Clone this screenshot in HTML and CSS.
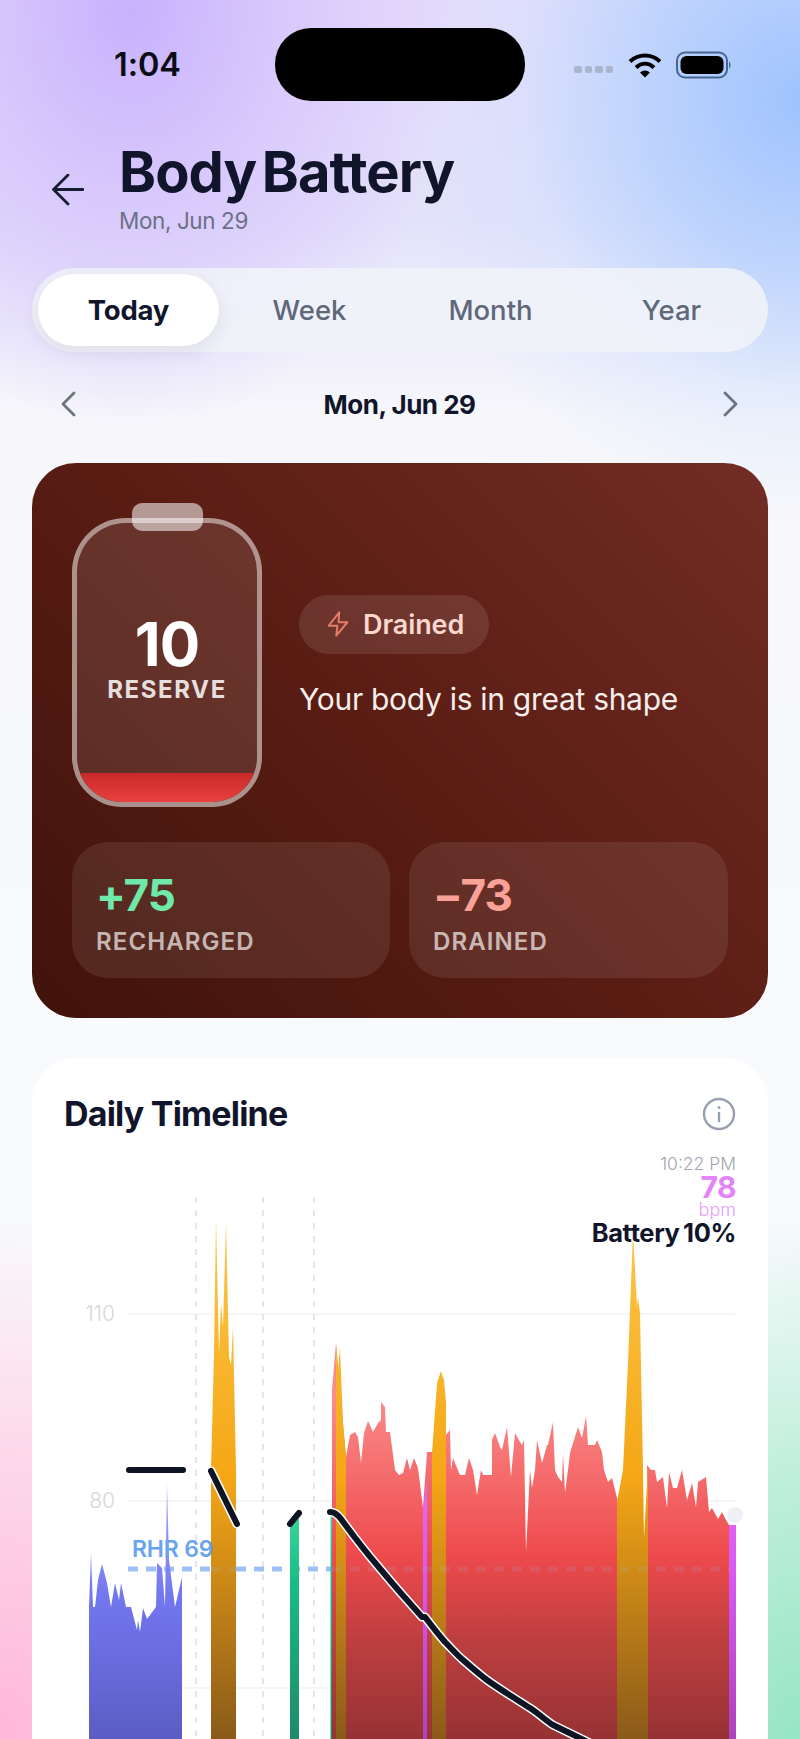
FILE: index.html
```html
<!DOCTYPE html>
<html lang="en">
<head>
<meta charset="utf-8">
<title>Body Battery</title>
<link rel="stylesheet" href="styles.css">
</head>
<body>
<div class="screen">
  <div class="status">
    <span class="time">1:04</span>
    <div class="island"></div>
    <div class="status-icons">
      <div class="dots"><i></i><i></i><i></i><i></i></div>
      <svg class="wifi" width="34" height="26" viewBox="0 0 34 26"><path d="M2 9.5C10.5 1.5 23.5 1.5 32 9.5" fill="none" stroke="#000" stroke-width="4"/><path d="M8 15.5C13.5 10.5 20.5 10.5 26 15.5" fill="none" stroke="#000" stroke-width="4"/><path d="M12 20.5 17 25.5 22 20.5C19 17.8 15 17.8 12 20.5Z" fill="#000"/></svg>
      <svg class="batt" width="56" height="28" viewBox="0 0 56 28"><rect x="1" y="1.5" width="50" height="25" rx="8" fill="none" stroke="#46658f" stroke-width="2"/><rect x="4.5" y="5" width="43" height="18" rx="6" fill="#000"/><path d="M53 10.5C55 11.5 55 16.5 53 17.5Z" fill="#46658f"/></svg>
    </div>
  </div>

  <header class="head">
    <svg class="back" width="32" height="32" viewBox="0 0 32 32"><path d="M31 15.5H2M16 1 1.5 15.5 16 30" fill="none" stroke="#171c30" stroke-width="2.8" stroke-linecap="round" stroke-linejoin="round"/></svg>
    <div class="head-text">
      <h1>Body Battery</h1>
      <p>Mon, Jun 29</p>
    </div>
  </header>

  <div class="tabs">
    <div class="tab active">Today</div>
    <div class="tab">Week</div>
    <div class="tab">Month</div>
    <div class="tab">Year</div>
  </div>

  <div class="date-nav">
    <svg width="16" height="26" viewBox="0 0 16 26"><path d="M14 2 3 13l11 11" fill="none" stroke="#6b7280" stroke-width="2.8" stroke-linecap="round" stroke-linejoin="round"/></svg>
    <span>Mon, Jun 29</span>
    <svg width="16" height="26" viewBox="0 0 16 26"><path d="M2 2l11 11L2 24" fill="none" stroke="#6b7280" stroke-width="2.8" stroke-linecap="round" stroke-linejoin="round"/></svg>
  </div>

  <section class="hero">
    <div class="hero-top">
      <div class="battery">
        <div class="battery-cap"></div>
        <div class="battery-body">
          <div class="battery-num">10</div>
          <div class="battery-label">RESERVE</div>
          <div class="battery-fill"></div>
        </div>
      </div>
      <div class="hero-info">
        <div class="badge">
          <svg width="28" height="28" viewBox="0 0 24 24"><path d="M13 2 4 13.5h7.5L10.5 22 20 10.5h-7.5L13 2Z" fill="none" stroke="#e87c6c" stroke-width="1.7" stroke-linejoin="round"/></svg>
          <span>Drained</span>
        </div>
        <p>Your body is in great shape</p>
      </div>
    </div>
    <div class="stats">
      <div class="stat"><div class="stat-num green">+75</div><div class="stat-label">RECHARGED</div></div>
      <div class="stat"><div class="stat-num salmon">−73</div><div class="stat-label">DRAINED</div></div>
    </div>
  </section>

  <section class="timeline">
    <div class="timeline-head">
      <h2>Daily Timeline</h2>
      <svg class="info" width="34" height="34" viewBox="0 0 34 34"><circle cx="17" cy="17" r="15" fill="none" stroke="#9aa0b0" stroke-width="2.4"/><path d="M17 16v8" stroke="#9aa0b0" stroke-width="2.4" stroke-linecap="round"/><circle cx="17" cy="10.5" r="1.5" fill="#9aa0b0"/></svg>
    </div>
    <div class="chart-wrap">
      <svg class="chart" width="736" height="559" viewBox="32 1180 736 559">
        <defs>
          <linearGradient id="gBlue" gradientUnits="userSpaceOnUse" x1="0" y1="1480" x2="0" y2="1739"><stop offset="0" stop-color="#a9acfb"/><stop offset=".45" stop-color="#7377ef"/><stop offset="1" stop-color="#5b5dc4"/></linearGradient>
          <linearGradient id="gOrange" gradientUnits="userSpaceOnUse" x1="0" y1="1210" x2="0" y2="1739"><stop offset="0" stop-color="#fcc84a"/><stop offset=".5" stop-color="#f5a716"/><stop offset=".62" stop-color="#dd9516"/><stop offset="1" stop-color="#8a5a1a"/></linearGradient>
          <linearGradient id="gRed" gradientUnits="userSpaceOnUse" x1="0" y1="1400" x2="0" y2="1739"><stop offset="0" stop-color="#fb8a8a"/><stop offset=".46" stop-color="#ee4a4c"/><stop offset=".7" stop-color="#bf3f40"/><stop offset="1" stop-color="#963234"/></linearGradient>
          <linearGradient id="gGreen" gradientUnits="userSpaceOnUse" x1="0" y1="1515" x2="0" y2="1739"><stop offset="0" stop-color="#3dd49d"/><stop offset=".3" stop-color="#18bd83"/><stop offset="1" stop-color="#1f8a6a"/></linearGradient>
          <linearGradient id="gMag" gradientUnits="userSpaceOnUse" x1="0" y1="1480" x2="0" y2="1739"><stop offset="0" stop-color="#e568f2"/><stop offset=".4" stop-color="#d757f0"/><stop offset="1" stop-color="#ad42bd"/></linearGradient>
        </defs>

        <g class="grid-h">
          <line x1="128" y1="1314" x2="735" y2="1314"/>
          <line x1="128" y1="1501" x2="735" y2="1501"/>
          <line x1="128" y1="1688" x2="735" y2="1688"/>
        </g>
        <g class="grid-v">
          <line x1="196" y1="1197" x2="196" y2="1739"/>
          <line x1="263" y1="1197" x2="263" y2="1739"/>
          <line x1="314" y1="1197" x2="314" y2="1739"/>
        </g>
        <text class="axis" x="115" y="1321" text-anchor="end">110</text>
        <text class="axis" x="115" y="1508" text-anchor="end">80</text>

        <line class="rhr-line" x1="128" y1="1569" x2="332" y2="1569"/>

        <polygon fill="url(#gBlue)" points="89,1739 89,1607 91,1553 93,1607 95,1607 98,1580 102,1564 107,1583 111,1607 115,1583 119,1600 121,1583 126,1607 131,1607 137,1630 138,1620 140,1632 143,1608 147,1619 156,1607 157,1563 162,1568 165,1607 167,1483 169,1560 175,1607 182,1577 182,1739"/>
        <polygon fill="url(#gOrange)" points="211,1739 211,1470 214,1353 216,1218 219,1353 221,1303 223,1327 226,1223 229,1357 231,1365 233,1327 236,1470 236,1739"/>
        <polygon fill="url(#gGreen)" points="290,1739 290,1528 299,1518 299,1739"/>
        <polygon fill="url(#gGreen)" points="330.5,1739 330.5,1515 333,1515 333,1739"/>
        <polygon fill="url(#gRed)" points="332,1739 332,1390 336,1343 346,1457 350,1435 355,1432 358,1437 361,1463 364,1433 368,1421 373,1432 378,1423 381,1420 381,1402 385,1407 386,1432 390,1432 395,1470 399,1475 403,1473 407,1458 410,1470 414,1458 418,1468 423,1508 427,1452 432,1452 450,1430 451,1470 453,1458 457,1468 460,1475 465,1475 469,1458 473,1470 477,1495 481,1470 483,1475 492,1475 492,1440 495,1433 500,1447 502,1450 507,1427 511,1477 515,1433 520,1442 522,1445 524,1440 526,1552 530,1470 532,1488 535,1470 537,1440 542,1463 547,1445 548,1445 553,1422 555,1470 558,1477 562,1482 563,1453 565,1493 568,1470 570,1453 578,1427 582,1438 586,1416 588,1445 595,1445 597,1440 602,1452 604,1470 608,1482 612,1478 618,1502 618,1739 648,1739 647,1465 651,1470 655,1470 657,1482 663,1477 667,1508 669,1472 673,1488 677,1488 682,1470 687,1500 692,1483 696,1507 698,1482 706,1477 709,1512 712,1508 718,1519 722,1512 725,1518 729,1525 729,1739"/>
        <polygon fill="url(#gMag)" points="423,1739 423,1508 427,1480 427,1739"/>
        <polygon fill="url(#gOrange)" points="336,1739 336,1343 338,1370 340,1348 343,1423 346,1457 346,1739"/>
        <polygon fill="url(#gOrange)" points="432,1739 432,1453 437,1383 441,1371 444,1380 446,1403 446,1739"/>
        <polygon fill="url(#gOrange)" points="617,1739 617,1502 623,1470 628,1363 633,1232 637,1307 638,1297 640,1313 643,1470 644,1538 648,1465 648,1739"/>
        <polygon fill="url(#gMag)" points="729,1739 729,1525 736,1525 736,1739"/>

        <line class="rhr-faint" x1="211" y1="1569" x2="236" y2="1569"/>
        <line class="rhr-faint" x1="332" y1="1569" x2="730" y2="1569"/>
        <circle cx="735" cy="1515" r="9" fill="#eef0f6" stroke="#fff" stroke-width="2"/>

        <text class="rhr-text" x="132" y="1557">RHR 69</text>

        <g class="halo">
          <path d="M211 1471 237 1524"/>
          <path d="M330 1512C335 1512 338 1515 341 1519C352 1534 364 1550 377 1565C387 1577 397 1589 407 1600L422 1617 425 1617C431 1625 438 1634 445 1642C451 1648 457 1655 463 1660C471 1667 479 1674 487 1680C501 1690 516 1699 530 1708C538 1713 545 1720 553 1725L590 1743"/>
        </g>
        <g class="line">
          <path d="M129 1470H183"/>
          <path d="M211 1471 237 1524"/>
          <path d="M290 1524 299 1513"/>
          <path d="M330 1512C335 1512 338 1515 341 1519C352 1534 364 1550 377 1565C387 1577 397 1589 407 1600L422 1617 425 1617C431 1625 438 1634 445 1642C451 1648 457 1655 463 1660C471 1667 479 1674 487 1680C501 1690 516 1699 530 1708C538 1713 545 1720 553 1725L590 1743"/>
        </g>
      </svg>
      <div class="readout">
        <div class="r-time">10:22 PM</div>
        <div class="r-num">78</div>
        <div class="r-unit">bpm</div>
        <div class="r-batt">Battery 10%</div>
      </div>
    </div>
  </section>
</div>
</body>
</html>
```

FILE: styles.css
```css
* { box-sizing: border-box; }
html, body { margin: 0; padding: 0; }
body { width: 800px; height: 1739px; overflow: hidden; font-family: Inter, "Liberation Sans", sans-serif; color: #111529; }
.screen {
  width: 800px; height: 1739px; overflow: hidden;
  background:
    radial-gradient(ellipse 330px 420px at 130px 10px, #c8b2fd 0%, rgba(214,196,252,.85) 45%, rgba(226,212,250,0) 100%),
    radial-gradient(ellipse 400px 420px at 800px 100px, #9fc3fe 0%, rgba(185,210,253,.85) 40%, rgba(205,224,253,.4) 70%, rgba(215,228,253,0) 100%),
    radial-gradient(ellipse 360px 520px at 0 1739px, #ffb6da 0%, rgba(255,205,228,.75) 55%, rgba(255,222,236,0) 100%),
    radial-gradient(ellipse 360px 520px at 800px 1739px, #96e5c3 0%, rgba(178,236,212,.75) 55%, rgba(200,240,225,0) 100%),
    linear-gradient(180deg, #e6dcfb 0, #e4e2fb 220px, #f7f7fb 420px, #f8fafc 1100px, #f8fafc 100%);
}

.status { display: flex; align-items: center; height: 73px; margin-top: 28px; padding-left: 114px; }
.time { width: 161px; font-size: 32.5px; font-weight: 600; line-height: 36px; color: #0b0d14; letter-spacing: -.1px; }
.island { width: 250px; height: 73px; border-radius: 36px; background: #000; }
.status-icons { display: flex; align-items: center; margin-left: 49px; }
.dots { display: flex; gap: 3px; margin-top: 10px; margin-right: 15px; }
.dots i { display: block; width: 7.5px; height: 7px; border-radius: 2px; background: #a9b5cb; }
.wifi { margin-right: 14px; }

.head { display: flex; align-items: flex-start; padding: 40px 0 0 52px; }
.back { margin: 33px 0 0; flex: none; }
.head-text { margin-left: 35px; }
h1 { margin: 0; font-size: 56px; line-height: 62px; font-weight: 700; letter-spacing: -.9px; word-spacing: -7px; color: #11152b; }
.head-text p { margin: 3px 0 0; font-size: 22.5px; line-height: 30px; color: #6c7184; letter-spacing: -.4px; }

.tabs {
  display: grid; grid-template-columns: repeat(4, 1fr); align-items: center;
  width: 736px; height: 84px; margin: 32px 0 0 32px; padding: 6px; border-radius: 42px;
  background: rgba(240,243,248,.88);
}
.tab { height: 72px; display: flex; align-items: center; justify-content: center; font-size: 27.5px; font-weight: 500; color: #5f677a; border-radius: 36px; }
.tab.active { background: #fff; color: #11152b; font-weight: 700; box-shadow: 0 6px 18px rgba(60,60,90,.1); letter-spacing: -.2px; }

.date-nav { display: flex; align-items: center; justify-content: space-between; margin: 38px 0 0; padding: 0 61px 0 60px; height: 28px; }
.date-nav span { font-size: 26px; font-weight: 700; color: #11152b; letter-spacing: -.5px; }

.hero {
  width: 736px; height: 555px; margin: 45px 0 0 32px; padding: 40px; border-radius: 44px;
  background: linear-gradient(45deg, #40130a 0%, #5a1d14 50%, #722c25 100%);
  display: flex; flex-direction: column;
}
.hero-top { display: flex; align-items: center; gap: 37px; height: 304px; }
.battery { width: 190px; height: 304px; display: flex; flex-direction: column; align-items: center; flex: none; }
.battery-cap { width: 71px; height: 28px; border-radius: 10px; background: rgba(255,255,255,.55); margin-bottom: -13px; z-index: 1; }
.battery-body {
  width: 190px; height: 289px; border: 5px solid rgba(255,255,255,.52); border-radius: 54px 54px 50px 50px;
  background: rgba(255,255,255,.1); overflow: hidden; display: flex; flex-direction: column; align-items: center;
  background-clip: padding-box;
}
.battery-num { margin-top: 86px; font-size: 60px; line-height: 70px; font-weight: 700; color: #fff; letter-spacing: -1px; }
.battery-label { margin-top: -4px; font-size: 24px; line-height: 30px; font-weight: 700; color: rgba(255,255,255,.86); letter-spacing: 1.6px; }
.battery-fill { width: 100%; height: 29px; margin-top: auto; background: linear-gradient(180deg, #c72a2a, #e9413f); }
.hero-info { display: flex; flex-direction: column; align-items: flex-start; margin-top: 1px; }
.badge { display: flex; align-items: center; gap: 11px; height: 59px; padding: 0 25px; border-radius: 30px; background: rgba(255,255,255,.1); }
.badge span { font-size: 27px; font-weight: 600; color: #fbd7ce; letter-spacing: -.1px; }
.hero-info p { margin: 27px 0 0; font-size: 30px; line-height: 36px; color: #f7eeeb; letter-spacing: -.3px; }

.stats { display: grid; grid-template-columns: 318px 319px; gap: 19px; margin-top: 35px; }
.stat { height: 136px; border-radius: 36px; background: rgba(255,255,255,.085); padding: 28px 0 0 24px; }
.stat-num { font-size: 44px; line-height: 50px; font-weight: 700; letter-spacing: -1px; }
.green { color: #6fe8a8; }
.salmon { color: #faa297; }
.stat-label { margin-top: 8px; font-size: 24px; line-height: 28px; font-weight: 600; color: rgba(255,255,255,.68); letter-spacing: 1.1px; }

.timeline { width: 736px; height: 700px; margin: 40px 0 0 32px; border-radius: 44px 44px 0 0; background: #fff; }
.timeline-head { display: flex; align-items: center; justify-content: space-between; padding: 39px 32px 0 32px; height: 73px; }
.info { margin-top: -1px; }
h2 { margin: 0; font-size: 34px; line-height: 40px; font-weight: 700; letter-spacing: -.8px; color: #11152b; }
.chart-wrap { display: grid; margin-top: -2px; }
.chart, .readout { grid-area: 1 / 1; }
.chart { display: block; margin-top: 51px; }
.readout { justify-self: end; padding: 24px 32px 0 0; text-align: right; }
.r-time { font-size: 17.5px; line-height: 22px; color: #a0a5b0; font-weight: 300; }
.r-num { font-size: 30px; line-height: 25px; font-weight: 700; color: #e583f8; letter-spacing: -.5px; }
.r-unit { font-size: 18px; line-height: 19px; color: #e79df7; font-weight: 300; }
.r-batt { font-size: 25.5px; line-height: 27px; font-weight: 700; color: #11152b; letter-spacing: -.4px; word-spacing: -2px; }

.grid-h line { stroke: #f4f5f6; stroke-width: 2; }
.grid-v line { stroke: #e4e6ea; stroke-width: 2; stroke-dasharray: 6 7; }
.axis { font-size: 21px; font-weight: 300; fill: #d5d8de; }
.rhr-line { stroke: #9dc1f7; stroke-width: 5; stroke-dasharray: 10 8; }
.rhr-faint { stroke: #9dc1f7; stroke-width: 5; stroke-dasharray: 10 8; opacity: .12; }
.rhr-text { font-size: 23px; font-weight: 600; fill: #6aa3ef; letter-spacing: -.2px; }
.halo path { fill: none; stroke: #fff; stroke-width: 9; stroke-linecap: round; stroke-linejoin: round; }
.line path { fill: none; stroke: #0f1424; stroke-width: 6; stroke-linecap: round; stroke-linejoin: round; }
```
